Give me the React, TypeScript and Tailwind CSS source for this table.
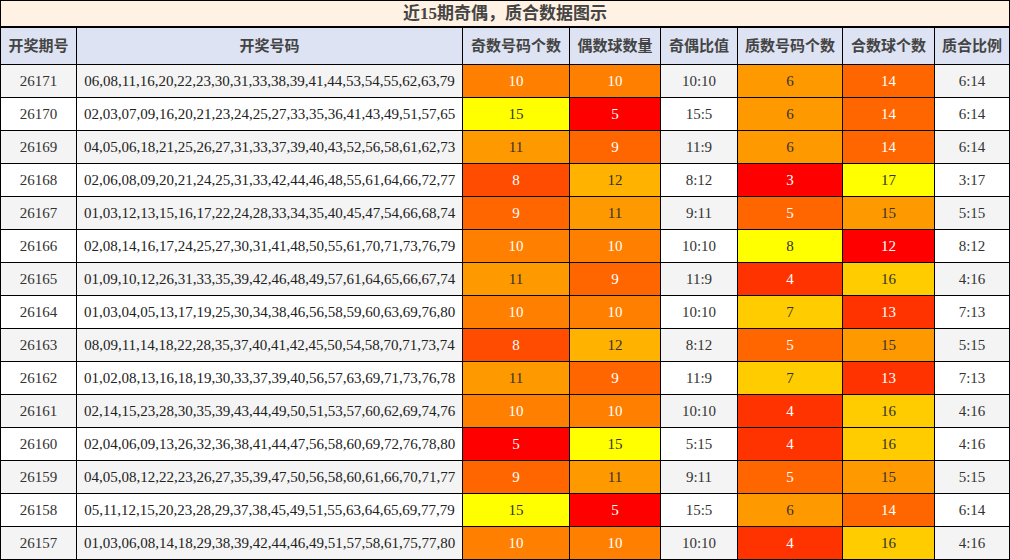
const headers = ["开奖期号", "开奖号码", "奇数号码个数", "偶数球数量", "奇偶比值", "质数号码个数", "合数球个数", "质合比例"]

// [period, numbers, odd, even, prime, composite]
const rows: [string, string, number, number, number, number][] = [
  ["26171", "06,08,11,16,20,22,23,30,31,33,38,39,41,44,53,54,55,62,63,79", 10, 10, 6, 14],
  ["26170", "02,03,07,09,16,20,21,23,24,25,27,33,35,36,41,43,49,51,57,65", 15, 5, 6, 14],
  ["26169", "04,05,06,18,21,25,26,27,31,33,37,39,40,43,52,56,58,61,62,73", 11, 9, 6, 14],
  ["26168", "02,06,08,09,20,21,24,25,31,33,42,44,46,48,55,61,64,66,72,77", 8, 12, 3, 17],
  ["26167", "01,03,12,13,15,16,17,22,24,28,33,34,35,40,45,47,54,66,68,74", 9, 11, 5, 15],
  ["26166", "02,08,14,16,17,24,25,27,30,31,41,48,50,55,61,70,71,73,76,79", 10, 10, 8, 12],
  ["26165", "01,09,10,12,26,31,33,35,39,42,46,48,49,57,61,64,65,66,67,74", 11, 9, 4, 16],
  ["26164", "01,03,04,05,13,17,19,25,30,34,38,46,56,58,59,60,63,69,76,80", 10, 10, 7, 13],
  ["26163", "08,09,11,14,18,22,28,35,37,40,41,42,45,50,54,58,70,71,73,74", 8, 12, 5, 15],
  ["26162", "01,02,08,13,16,18,19,30,33,37,39,40,56,57,63,69,71,73,76,78", 11, 9, 7, 13],
  ["26161", "02,14,15,23,28,30,35,39,43,44,49,50,51,53,57,60,62,69,74,76", 10, 10, 4, 16],
  ["26160", "02,04,06,09,13,26,32,36,38,41,44,47,56,58,60,69,72,76,78,80", 5, 15, 4, 16],
  ["26159", "04,05,08,12,22,23,26,27,35,39,47,50,56,58,60,61,66,70,71,77", 9, 11, 5, 15],
  ["26158", "05,11,12,15,20,23,28,29,37,38,45,49,51,55,63,64,65,69,77,79", 15, 5, 6, 14],
  ["26157", "01,03,06,08,14,18,29,38,39,42,44,46,49,51,57,58,61,75,77,80", 10, 10, 4, 16],
]

// red -> yellow heat scale for odd/even counts (5..15)
const oddEvenColor: { [key: number]: string } = {
  5: "bg-[#ff0000] text-white",
  6: "bg-[#ff1a00] text-white",
  7: "bg-[#ff3300] text-white",
  8: "bg-[#ff4c00] text-white",
  9: "bg-[#ff6600] text-white",
  10: "bg-[#ff8000] text-white",
  11: "bg-[#ff9900] text-[#333]",
  12: "bg-[#ffb200] text-[#333]",
  13: "bg-[#ffcc00] text-[#333]",
  14: "bg-[#ffe500] text-[#333]",
  15: "bg-[#ffff00] text-[#333]",
}

// 6 steps for prime (3..8) / composite (12..17)
const stepColor = [
  "bg-[#ff0000] text-white",
  "bg-[#ff3300] text-white",
  "bg-[#ff6600] text-white",
  "bg-[#ff9900] text-[#333]",
  "bg-[#ffcc00] text-[#333]",
  "bg-[#ffff00] text-[#333]",
]

const cell = "flex items-center justify-center"

export default function App() {
  return (
    <div
      className="w-[1010px] h-[560px] bg-black p-px flex flex-col text-[15px] leading-none"
      style={{ fontFamily: '"Liberation Serif", "Noto Sans CJK SC", serif' }}
    >
      {/* Title */}
      <div className={`${cell} h-[25px] mb-[2px] bg-[#fff1e3] text-[17px] font-bold text-[#444]`}>
        近15期奇偶，质合数据图示
      </div>

      <div className="grid grid-cols-[75px_385px_106px_90px_76px_104px_91px_74px] grid-rows-[36px_repeat(15,32px)] gap-px">
        {headers.map((h) => (
          <div key={h} className={`${cell} bg-[#dde3f2] font-bold text-[#444]`}>
            {h}
          </div>
        ))}

        {rows.map(([period, nums, odd, even, prime, comp], i) => {
          const bg = i % 2 === 0 ? "bg-[#f4f4f4]" : "bg-white"
          return [
            <div key={`${period}-p`} className={`${cell} ${bg} text-[#333]`}>{period}</div>,
            <div key={`${period}-n`} className={`${cell} ${bg} text-[#222]`}>{nums}</div>,
            <div key={`${period}-o`} className={`${cell} ${oddEvenColor[odd]}`}>{odd}</div>,
            <div key={`${period}-e`} className={`${cell} ${oddEvenColor[even]}`}>{even}</div>,
            <div key={`${period}-r`} className={`${cell} ${bg} text-[#333]`}>{odd}:{even}</div>,
            <div key={`${period}-z`} className={`${cell} ${stepColor[prime - 3]}`}>{prime}</div>,
            <div key={`${period}-h`} className={`${cell} ${stepColor[comp - 12]}`}>{comp}</div>,
            <div key={`${period}-b`} className={`${cell} ${bg} text-[#333]`}>{prime}:{comp}</div>,
          ]
        })}
      </div>
    </div>
  )
}
